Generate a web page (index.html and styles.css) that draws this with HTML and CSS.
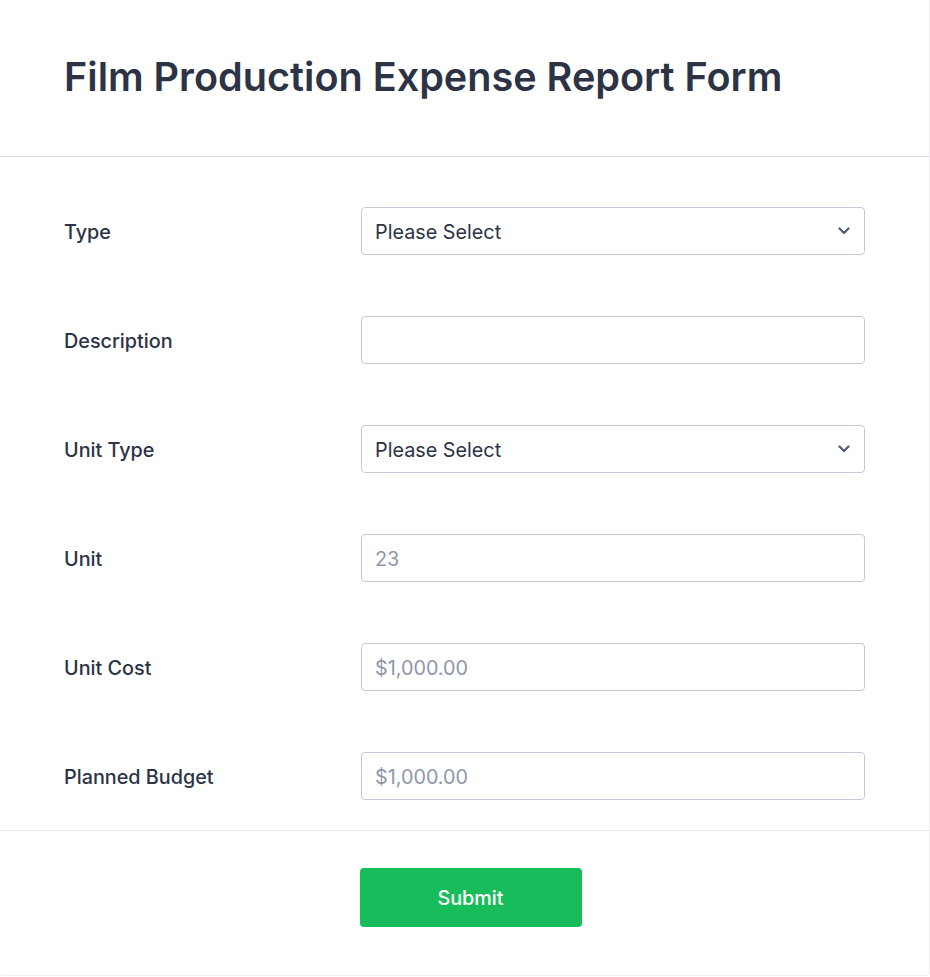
FILE: index.html
```html
<!DOCTYPE html>
<html lang="en">
<head>
<meta charset="utf-8">
<title>Film Production Expense Report Form</title>
<link rel="stylesheet" href="styles.css">
</head>
<body>
<div class="card">
  <header class="header">
    <h1 class="title">Film Production Expense Report Form</h1>
  </header>
  <div class="fields">
    <div class="row">
      <label class="label">Type</label>
      <div class="control select"><span class="value">Please Select</span>
        <svg class="chev" width="12" height="8" viewBox="0 0 12 8"><path d="M1.5 1.5 L6 6 L10.5 1.5" fill="none" stroke="#4f5d77" stroke-width="2.2" stroke-linecap="round" stroke-linejoin="round"/></svg>
      </div>
    </div>
    <div class="row">
      <label class="label">Description</label>
      <div class="control"></div>
    </div>
    <div class="row">
      <label class="label">Unit Type</label>
      <div class="control select"><span class="value">Please Select</span>
        <svg class="chev" width="12" height="8" viewBox="0 0 12 8"><path d="M1.5 1.5 L6 6 L10.5 1.5" fill="none" stroke="#4f5d77" stroke-width="2.2" stroke-linecap="round" stroke-linejoin="round"/></svg>
      </div>
    </div>
    <div class="row">
      <label class="label">Unit</label>
      <div class="control"><span class="placeholder">23</span></div>
    </div>
    <div class="row">
      <label class="label">Unit Cost</label>
      <div class="control"><span class="placeholder">$1,000.00</span></div>
    </div>
    <div class="row">
      <label class="label">Planned Budget</label>
      <div class="control"><span class="placeholder">$1,000.00</span></div>
    </div>
  </div>
  <div class="footer">
    <button class="submit" type="button">Submit</button>
  </div>
</div>
</body>
</html>
```
FILE: styles.css
```css
html, body {
  margin: 0;
  padding: 0;
  background: #ffffff;
}
body {
  font-family: Inter, "Noto Sans", sans-serif;
  color: #2c3345;
}
.card {
  width: 930px;
  height: 976px;
  border-right: 1px solid #eef0f4;
  border-bottom: 1px solid #f0f0f3;
  border-radius: 0 0 4px 4px;
  box-sizing: border-box;
}
.header {
  height: 154px;
  padding: 0 64px 2px 64px;
  border-bottom: 1px solid #dadbe6;
  display: flex;
  align-items: center;
}
.title {
  margin: 0;
  font-size: 39.6px;
  font-weight: 600;
  line-height: 48px;
  color: #2c3345;
}
.fields {
  padding: 50px 64px 30px 64px;
  display: flex;
  flex-direction: column;
  gap: 61px;
  border-bottom: 1px solid #e6e7ee;
}
.row {
  display: flex;
  align-items: center;
  height: 48px;
}
.label {
  width: 297px;
  font-size: 19.8px;
  font-weight: 500;
  color: #2c3345;
  padding-top: 2px;
}
.control {
  width: 504px;
  height: 48px;
  box-sizing: border-box;
  border: 1px solid #c3cad8;
  border-radius: 4px;
  padding: 0 13px;
  display: flex;
  align-items: center;
  justify-content: space-between;
  font-size: 19.8px;
}
.value {
  color: #2c3345;
  padding-top: 1px;
}
.placeholder {
  color: #8d97a8;
  padding-top: 1px;
}
.chev {
  margin-right: 1px;
}
.footer {
  display: flex;
  justify-content: center;
  padding-top: 37px;
}
.submit {
  width: 222px;
  height: 59px;
  background: #18bd5b;
  border: none;
  border-radius: 4px;
  color: #ffffff;
  font-family: Inter, "Noto Sans", sans-serif;
  font-size: 19.8px;
  font-weight: 500;
  margin-left: 12px;
}
```
